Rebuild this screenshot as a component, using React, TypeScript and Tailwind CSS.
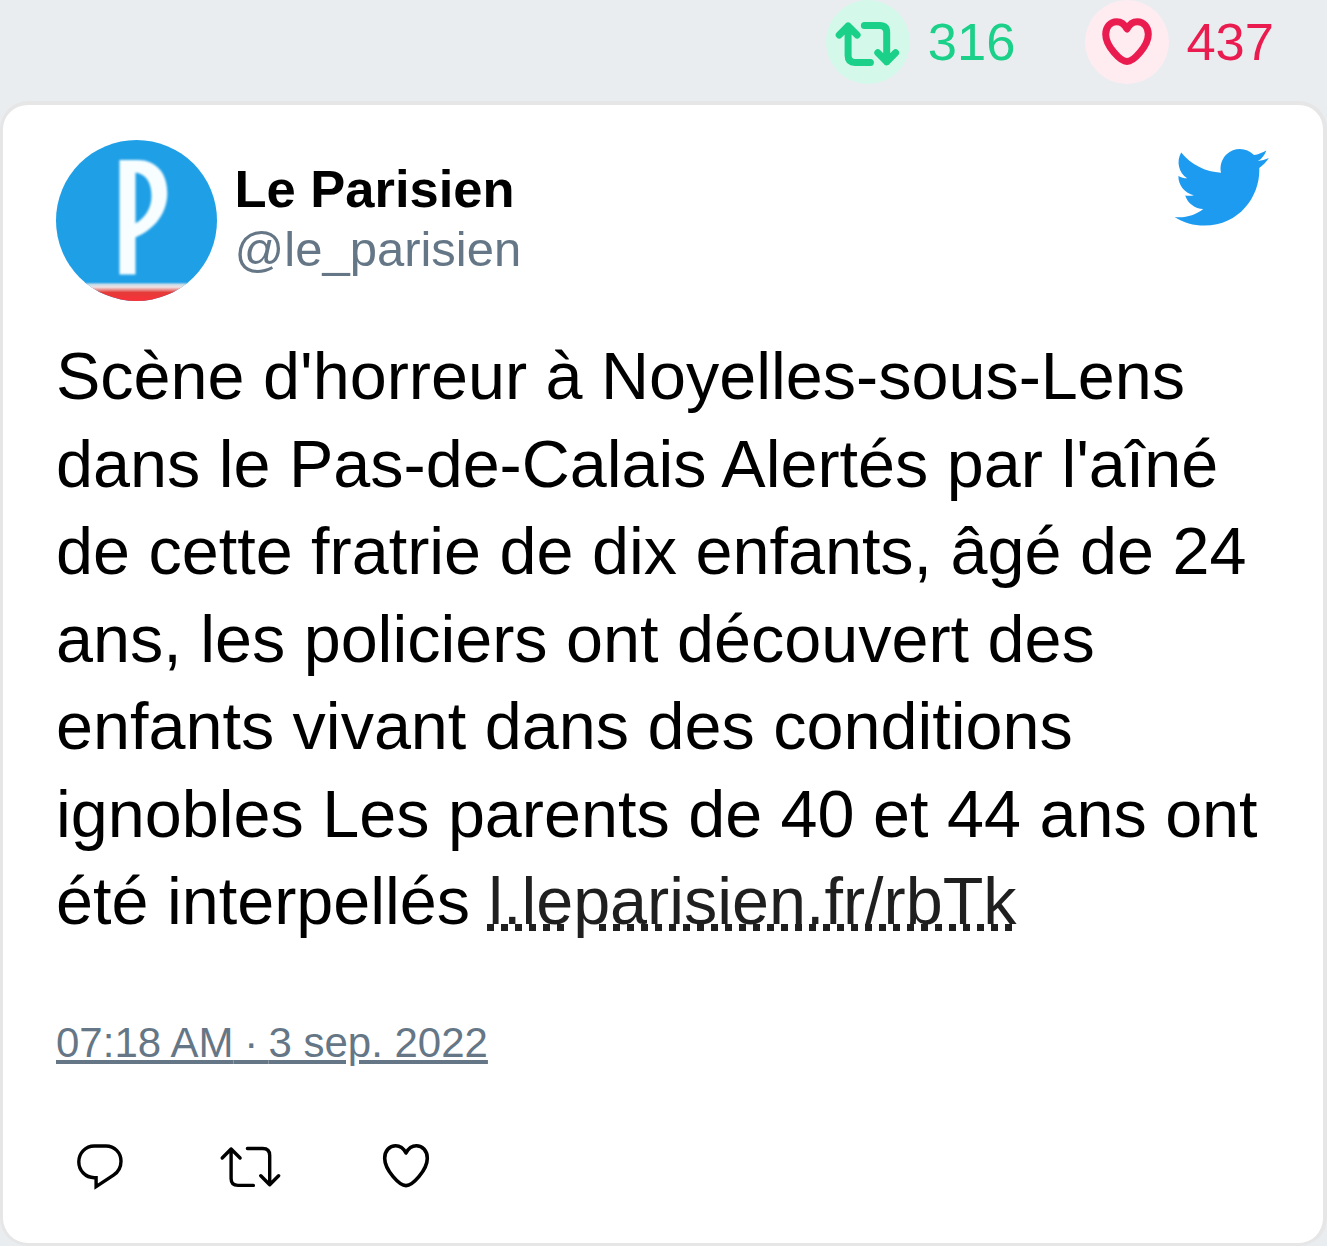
import React from "react";

const HEART =
  "M23.5 9 C21 4.2 17.2 1.7 13.2 1.7 C6.8 1.7 2.2 7 2.2 14.2 C2.2 26 17 41.6 23.5 41.6 C30 41.6 44.8 26 44.8 14.2 C44.8 7 40.2 1.7 33.8 1.7 C29.8 1.7 26 4.2 23.5 9 Z";

function HeartIcon({ weight }: { weight: number }) {
  return (
    <svg width="47" height="44" viewBox="0.5 0 47 44" fill="none" stroke="currentColor" strokeWidth={weight} strokeLinejoin="round" className="overflow-visible">
      <path d={HEART} />
    </svg>
  );
}

function RetweetIcon({ weight }: { weight: number }) {
  return (
    <svg width="60" height="40" viewBox="0.6 0 60 40" fill="none" stroke="currentColor" strokeWidth={weight} strokeLinecap="round" strokeLinejoin="round" className="overflow-visible">
      <path d="M1.8 11 L10.7 2 L19.7 11 M10.7 2 V31.5 Q10.7 38.4 17.6 38.4 H33" />
      <path d="M27 1.5 H42.3 Q49.3 1.5 49.3 8.5 V37.7 M40.4 28.7 L49.3 37.7 L58.2 28.7" />
    </svg>
  );
}

function ReplyIcon() {
  return (
    <svg width="46" height="46" viewBox="0 0 46 46" fill="none" stroke="currentColor" strokeWidth="3.4" className="overflow-visible">
      <path d="M17.3 2 H29 C37.5 2 44 8.7 44 17.2 C44 23 41.2 28 36.5 31.2 L19.1 42.6 V33.7 H17.3 C8.5 33.7 1.8 26.6 1.8 17.8 C1.8 9 8.5 2 17.3 2 Z" />
    </svg>
  );
}

function TwitterLogo() {
  return (
    <svg width="95" height="78" viewBox="2 1.5 248 203.6" fill="#1d9bf0" className="overflow-visible">
      <path d="M221.95 51.29c.15 2.17.15 4.34.15 6.53 0 66.73-50.8 143.69-143.69 143.69v-.04c-27.44.04-54.31-7.82-77.41-22.64 3.99.48 8 .72 12.02.73 22.74.02 44.83-7.61 62.72-21.66-21.61-.41-40.56-14.5-47.18-35.07 7.57 1.46 15.37 1.16 22.8-.87-23.56-4.76-40.51-25.46-40.51-49.5v-.64c7.02 3.91 14.88 6.08 22.92 6.32C11.58 63.31 4.74 33.79 18.14 10.71c25.64 31.55 63.47 50.73 104.08 52.76-4.07-17.54 1.49-35.92 14.61-48.25 20.34-19.12 52.33-18.14 71.45 2.19 11.31-2.23 22.15-6.38 32.07-12.26-3.77 11.69-11.66 21.62-22.2 27.93 10.01-1.18 19.79-3.86 29-7.95-6.78 10.16-15.32 19.01-25.2 26.16z" />
    </svg>
  );
}

function Avatar() {
  return (
    <div className="h-[161px] w-[161px] overflow-hidden rounded-full bg-[#1f9fe6]">
      <svg width="161" height="161" viewBox="0 0 161 161">
        <defs>
          <filter id="soft" x="-10%" y="-10%" width="120%" height="120%">
            <feGaussianBlur stdDeviation="1.2" />
          </filter>
          <linearGradient id="base" x1="0" y1="0" x2="0" y2="1">
            <stop offset="0" stopColor="#1f9fe6" />
            <stop offset="0.14" stopColor="#c9dce8" />
            <stop offset="0.27" stopColor="#efe0e2" />
            <stop offset="0.42" stopColor="#e88a88" />
            <stop offset="0.55" stopColor="#e43b39" />
            <stop offset="1" stopColor="#fb3038" />
          </linearGradient>
        </defs>
        <g filter="url(#soft)" fill="#f8feff">
          <rect x="63.5" y="20" width="16" height="114.5" />
          <path d="M78 20 H82 C99 20 111.3 32 111.3 53 C111.3 73 99 89.5 78 98 V84 C90 78.5 95.5 67 95.5 56 C95.5 42 89.5 33 78 32.5 Z" />
        </g>
        <rect x="0" y="142" width="161" height="19" fill="url(#base)" />
      </svg>
    </div>
  );
}

export default function App() {
  return (
    <div className="flex h-[1246px] w-[1327px] flex-col overflow-hidden bg-[#e9edf0] font-['Liberation_Sans',Arial,sans-serif]">
      <div className="flex h-[101px] shrink-0 items-start justify-end pr-[53px] text-[52.5px] leading-[84px]">
        <div className="flex text-[#1bd088]">
          <span className="flex size-[84px] items-center justify-center rounded-full bg-[#d4f9ea] pt-[3px] pr-[1px]">
            <RetweetIcon weight={7} />
          </span>
          <span className="ml-[17.5px]">316</span>
        </div>
        <div className="ml-[70px] flex text-[#ea1c4f]">
          <span className="flex size-[84px] items-center justify-center rounded-full bg-[#feecf1] pl-[1px]">
            <HeartIcon weight={7} />
          </span>
          <span className="ml-[17px]">437</span>
        </div>
      </div>

      <article className="flex h-[1145px] flex-col rounded-[28px] border-4 border-b-3 border-l-3 border-[#e6e6e6] bg-white pl-[53px]">
        <header className="flex pt-[35px] pr-[53px]">
          <Avatar />
          <div className="ml-[17.5px] flex flex-col pt-[18px]">
            <span className="text-[52.5px] leading-[61px] font-bold text-black">Le Parisien</span>
            <span className="text-[49px] leading-[60px] text-[#657786]">@le_parisien</span>
          </div>
          <div className="mt-[9px] ml-auto">
            <TwitterLogo />
          </div>
        </header>

        <p className="mt-[32px] text-[66.5px] leading-[87.5px] whitespace-nowrap text-black">
          Scène d'horreur à Noyelles-sous-Lens
          <br />
          dans le Pas-de-Calais Alertés par l'aîné
          <br />
          de cette fratrie de dix enfants, âgé de 24
          <br />
          ans, les policiers ont découvert des
          <br />
          enfants vivant dans des conditions
          <br />
          ignobles Les parents de 40 et 44 ans ont
          <br />
          été interpellés{" "}
          <a className="-ml-[2px] bg-[linear-gradient(90deg,transparent_84px,#fff_84px_105px,transparent_105px),repeating-linear-gradient(90deg,#1f1f1f_0_7px,transparent_7px_14px)] bg-[length:100%_7px] bg-[position:0_calc(100%_-_7px)] bg-no-repeat pl-[1.6px] text-[#1f1f1f]">
            l.leparisien.fr/rbTk
          </a>
        </p>

        <div className="mt-[72px] text-[42px] leading-[50px] text-[#657786]">
          <a className="underline">
            07:18 AM<span className="tracking-[-0.8px]"> · </span>3 sep. 2022
          </a>
        </div>

        <footer className="mt-[76px] flex items-start pl-[21px] text-black">
          <ReplyIcon />
          <div className="mt-[3px] ml-[98px]">
            <RetweetIcon weight={3.4} />
          </div>
          <div className="ml-[102px]">
            <HeartIcon weight={3.6} />
          </div>
        </footer>
      </article>
    </div>
  );
}
